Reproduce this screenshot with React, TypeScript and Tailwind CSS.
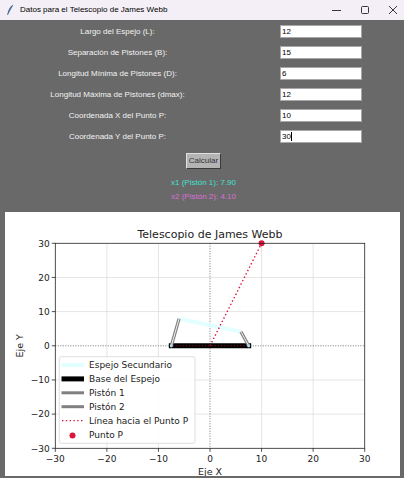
import React from "react";

const fields = [
  { label: "Largo del Espejo (L):", value: "12" },
  { label: "Separación de Pistones (B):", value: "15" },
  { label: "Longitud Mínima de Pistones (D):", value: "6" },
  { label: "Longitud Máxima de Pistones (dmax):", value: "12" },
  { label: "Coordenada X del Punto P:", value: "10" },
  { label: "Coordenada Y del Punto P:", value: "30", cursor: true },
];

// data -> svg coords (svg sits at page x=5, y=212)
const X = (v: number) => 50.3 + (v + 30) * 5.157;
const Y = (v: number) => 236.3 - (v + 30) * 3.417;
const ticks = [-30, -20, -10, 0, 10, 20, 30];
const fmt = (t: number) => (t < 0 ? `\u2212${-t}` : `${t}`);

function TitleBar() {
  return (
    <div className="h-[20px] bg-[#f4eff6] flex items-center relative">
      <svg width="10" height="12" viewBox="0 0 10 12" className="ml-[5px]">
        <path d="M8.5 0.5 C5 2 3 6 2.2 11 L3 11 C4.5 7 7 4 8.5 0.5 Z" fill="#4a6a9a" />
      </svg>
      <span className="ml-[5px] text-[8px] text-black" style={{ fontFamily: '"Liberation Sans", sans-serif' }}>
        Datos para el Telescopio de James Webb
      </span>
      <div className="ml-auto flex items-center">
        <svg width="12" height="12" className="mr-[16px]">
          <line x1="1" y1="6.5" x2="10" y2="6.5" stroke="#222" strokeWidth="0.9" />
        </svg>
        <svg width="12" height="12" className="mr-[16px]">
          <rect x="2.5" y="2.5" width="7" height="7" fill="none" stroke="#222" strokeWidth="0.9" rx="1" />
        </svg>
        <svg width="12" height="12" className="mr-[5px]">
          <line x1="2" y1="2" x2="10" y2="10" stroke="#222" strokeWidth="0.9" />
          <line x1="10" y1="2" x2="2" y2="10" stroke="#222" strokeWidth="0.9" />
        </svg>
      </div>
    </div>
  );
}

function Chart() {
  const grid = [-20, -10, 10, 20];
  const legend = [
    { name: "Espejo Secundario", kind: "cyan" },
    { name: "Base del Espejo", kind: "black" },
    { name: "Pistón 1", kind: "gray" },
    { name: "Pistón 2", kind: "gray" },
    { name: "Línea hacia el Punto P", kind: "dot" },
    { name: "Punto P", kind: "point" },
  ];
  return (
    <svg width="395" height="264" viewBox="0 0 395 264" style={{ fontFamily: '"DejaVu Sans", sans-serif' }}>
      <text x="205" y="26" textAnchor="middle" fontSize="11" fill="#222">
        Telescopio de James Webb
      </text>
      {grid.map((g) => (
        <g key={g}>
          <line x1={X(g)} y1={Y(30)} x2={X(g)} y2={Y(-30)} stroke="#dedede" strokeWidth="0.8" />
          <line x1={X(-30)} y1={Y(g)} x2={X(30)} y2={Y(g)} stroke="#dedede" strokeWidth="0.8" />
        </g>
      ))}
      <line x1={X(0)} y1={Y(30)} x2={X(0)} y2={Y(-30)} stroke="#555" strokeWidth="0.8" strokeDasharray="1 1.5" />
      <line x1={X(-30)} y1={Y(0)} x2={X(30)} y2={Y(0)} stroke="#555" strokeWidth="0.8" strokeDasharray="1 1.5" />

      {/* mirror */}
      <line x1={X(-6)} y1={Y(7.9)} x2={X(6)} y2={Y(4.1)} stroke="#e0ffff" strokeWidth="4" opacity="0.9" />
      {/* base */}
      <line x1={X(-7.5)} y1={Y(0)} x2={X(7.5)} y2={Y(0)} stroke="#000" strokeWidth="5" strokeLinecap="square" />
      <line x1={X(-7.2)} y1={Y(0)} x2={X(7.2)} y2={Y(0)} stroke="#8b1020" strokeWidth="1" strokeDasharray="1.2 2" />
      {/* pistons */}
      {[
        [-7.5, 0, -6, 7.9],
        [7.5, 0, 6, 4.1],
      ].map(([a, b, c, d], i) => (
        <g key={i}>
          <line x1={X(a)} y1={Y(b)} x2={X(c)} y2={Y(d)} stroke="#808080" strokeWidth="3.2" />
          <line x1={X(a)} y1={Y(b)} x2={X(c)} y2={Y(d)} stroke="#f2f2f2" strokeWidth="1" />
          <circle cx={X(a)} cy={Y(b)} r="1.6" fill="#add8e6" />
        </g>
      ))}
      {/* line to P */}
      <line x1={X(0)} y1={Y(0)} x2={X(10)} y2={Y(30)} stroke="#dc143c" strokeWidth="1.4" strokeDasharray="1.4 2.4" />
      <circle cx={X(10)} cy={Y(30)} r="3" fill="#dc143c" />

      {/* frame */}
      <rect x={X(-30)} y={Y(30)} width={X(30) - X(-30)} height={Y(-30) - Y(30)} fill="none" stroke="#222" strokeWidth="0.8" />
      {ticks.map((t) => (
        <g key={t}>
          <line x1={X(-30) - 3.5} y1={Y(t)} x2={X(-30)} y2={Y(t)} stroke="#222" strokeWidth="0.8" />
          <text x={X(-30) - 5.5} y={Y(t) + 3.3} textAnchor="end" fontSize="9" fill="#222">
            {fmt(t)}
          </text>
          <line x1={X(t)} y1={Y(-30)} x2={X(t)} y2={Y(-30) + 3.5} stroke="#222" strokeWidth="0.8" />
          <text x={X(t)} y={Y(-30) + 14} textAnchor="middle" fontSize="9" fill="#222">
            {fmt(t)}
          </text>
        </g>
      ))}
      <text x="205" y="262.5" textAnchor="middle" fontSize="9.5" fill="#222">
        Eje X
      </text>
      <text transform="translate(17.5 133.8) rotate(-90)" textAnchor="middle" fontSize="9.5" fill="#222">
        Eje Y
      </text>

      {/* legend */}
      <rect x="54.3" y="144.7" width="135.7" height="86.6" rx="2" fill="#fff" fillOpacity="0.85" stroke="#d6d6d6" strokeWidth="0.8" />
      {legend.map((l, i) => {
        const cy = 153 + i * 13.9;
        return (
          <g key={l.name}>
            {l.kind === "cyan" && <line x1="56.5" y1={cy} x2="79" y2={cy} stroke="#e0ffff" strokeWidth="4" />}
            {l.kind === "black" && <line x1="56.5" y1={cy} x2="79" y2={cy} stroke="#000" strokeWidth="5" />}
            {l.kind === "gray" && <line x1="56.5" y1={cy} x2="79" y2={cy} stroke="#808080" strokeWidth="3" />}
            {l.kind === "dot" && (
              <line x1="57" y1={cy} x2="79" y2={cy} stroke="#dc143c" strokeWidth="1.4" strokeDasharray="1.4 2.4" />
            )}
            {l.kind === "point" && <circle cx="67.5" cy={cy + 1} r="3" fill="#dc143c" />}
            <text x="84" y={cy + 3.3} fontSize="9" fill="#222">
              {l.name}
            </text>
          </g>
        );
      })}
    </svg>
  );
}

export default function App() {
  return (
    <div className="w-[404px] h-[478px] overflow-hidden bg-[#696969]" style={{ fontFamily: '"Liberation Sans", sans-serif' }}>
      <TitleBar />
      <div className="h-[192px] bg-[#696969] pt-[5px] flex flex-col">
        <div className="flex flex-col gap-[8px]">
          {fields.map((f) => (
            <div key={f.label} className="flex items-center h-[13px]">
              <span className="w-[235px] text-center text-[8px] text-[#f2f2f2]">{f.label}</span>
              <div className="ml-[45px] w-[82px] h-[13px] bg-white border border-[#a8a8a8] flex items-center pl-[1px] text-[8px] text-black">
                {f.value}
                {f.cursor && <span className="w-px h-[9px] bg-black" />}
              </div>
            </div>
          ))}
        </div>
        <div className="flex justify-center mt-[10px] pl-[3px]">
          <button className="w-[35px] h-[16px] bg-[#b4b4b4] border border-[#3a3a3a] border-t-[#e0e0e0] border-l-[#e0e0e0] text-[8px] text-[#333] flex items-center justify-center">
            Calcular
          </button>
        </div>
        <div className="mt-[7px] flex flex-col items-center pl-[3px] text-[8px] leading-[14px]">
          <span className="text-[#40e0d0]">x1 (Pistón 1): 7.90</span>
          <span className="text-[#da70d6]">x2 (Pistón 2): 4.10</span>
        </div>
      </div>
      <div className="pl-[5px] pr-[4px] pb-[2px] h-[266px]">
        <div className="bg-white w-[395px] h-[264px]">
          <Chart />
        </div>
      </div>
    </div>
  );
}
